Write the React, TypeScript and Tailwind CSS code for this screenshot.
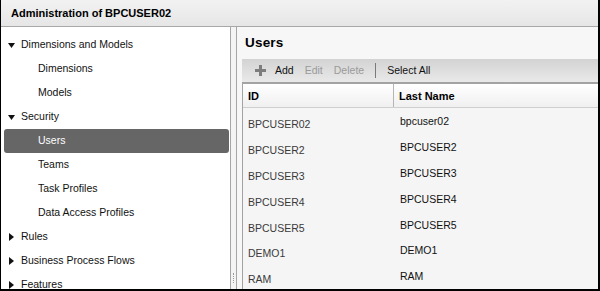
import React from 'react';

type TreeItem = { label: string; level: 0 | 1; open?: boolean; selected?: boolean };

const tree: TreeItem[] = [
  { label: 'Dimensions and Models', level: 0, open: true },
  { label: 'Dimensions', level: 1 },
  { label: 'Models', level: 1 },
  { label: 'Security', level: 0, open: true },
  { label: 'Users', level: 1, selected: true },
  { label: 'Teams', level: 1 },
  { label: 'Task Profiles', level: 1 },
  { label: 'Data Access Profiles', level: 1 },
  { label: 'Rules', level: 0, open: false },
  { label: 'Business Process Flows', level: 0, open: false },
  { label: 'Features', level: 0, open: false },
];

const users: [string, string][] = [
  ['BPCUSER02', 'bpcuser02'],
  ['BPCUSER2', 'BPCUSER2'],
  ['BPCUSER3', 'BPCUSER3'],
  ['BPCUSER4', 'BPCUSER4'],
  ['BPCUSER5', 'BPCUSER5'],
  ['DEMO1', 'DEMO1'],
  ['RAM', 'RAM'],
];

function Arrow({ open }: { open: boolean }) {
  if (open) {
    return (
      <svg width="7" height="5" viewBox="0 0 7 5" className="shrink-0">
        <path d="M0 0h7L3.5 5z" fill="#111" />
      </svg>
    );
  }
  return (
    <svg width="5" height="8" viewBox="0 0 5 8" className="shrink-0">
      <path d="M0 0l5 4-5 4z" fill="#111" />
    </svg>
  );
}

export default function App() {
  return (
    <div
      className="w-[600px] h-[291px] flex flex-col overflow-hidden bg-white border-l border-r-2 border-b-2 border-black text-[#1a1a1a]"
      style={{ fontFamily: '"Liberation Sans", Arial, sans-serif' }}
    >
      {/* title bar */}
      <div className="h-[27px] shrink-0 flex items-center pl-[10px] bg-gradient-to-b from-[#f2f2f2] to-[#e6e6e6] border-b border-[#a8a8a8]">
        <span className="text-[11px] font-bold text-black">Administration of BPCUSER02</span>
      </div>

      <div className="flex flex-1 min-h-0">
        {/* navigation tree */}
        <div className="w-[229px] shrink-0 bg-white pt-[6px]">
          {tree.map((t) =>
            t.selected ? (
              <div
                key={t.label}
                className="h-[24px] mx-[3px] mr-[1px] rounded-[3px] bg-[#666666] flex items-center pl-[34px] text-[10.5px] text-white"
              >
                {t.label}
              </div>
            ) : (
              <div
                key={t.label}
                className={
                  'h-[24px] flex items-center text-[10.5px] text-[#111] ' +
                  (t.level === 0 ? 'pl-[7px] gap-[6px]' : 'pl-[37px]')
                }
              >
                {t.level === 0 && (
                  <span className="w-[7px] flex justify-center">
                    <Arrow open={!!t.open} />
                  </span>
                )}
                {t.label}
              </div>
            )
          )}
        </div>

        {/* splitter */}
        <div className="w-[7px] shrink-0 border-l border-r border-[#a6a6a6] bg-[#f4f4f4] flex flex-col justify-end items-center pb-[6px]">
          <div className="w-px h-[10px] border-l border-dotted border-[#9a9a9a]" />
        </div>

        {/* content */}
        <div className="flex-1 min-w-0 bg-[#f7f7f7] pl-[5px] flex flex-col">
          <div className="h-[33px] flex items-center pl-[3px] pt-[1px]">
            <span className="text-[13.5px] font-bold text-black tracking-[0.2px]">Users</span>
          </div>

          {/* toolbar */}
          <div className="h-[25px] flex items-center bg-gradient-to-b from-[#d3d3d3] to-[#e9e9e9] text-[10.5px] pl-[13px]">
            <svg width="11" height="11" viewBox="0 0 11 11" className="mr-[9px]">
              <path d="M4 0h3v4h4v3H7v4H4V7H0V4h4z" fill="#7d7d7d" />
            </svg>
            <span className="text-[#111]">Add</span>
            <span className="ml-[11px] text-[#9a9a9a]">Edit</span>
            <span className="ml-[11px] text-[#9a9a9a]">Delete</span>
            <span className="ml-[11px] w-px h-[15px] bg-[#7a7a7a]" />
            <span className="ml-[11px] text-[#111]">Select All</span>
          </div>

          {/* table */}
          <div className="flex-1 border-l border-t-2 border-[#a3a3a3] bg-[#f5f5f5]">
            <div className="h-[24px] flex items-center bg-gradient-to-b from-white to-[#f0f0f0] border-b border-[#cfcfcf] text-[11px] font-bold text-black">
              <div className="w-[151px] pl-[5px] border-r border-[#b5b5b5] h-full flex items-center">ID</div>
              <div className="pl-[5px]">Last Name</div>
            </div>
            {users.map(([id, last]) => (
              <div key={id} className="h-[25.8px] flex text-[10.5px]">
                <div className="w-[151px] pl-[5px] pt-[9px] text-[#3a3a3a]">{id}</div>
                <div className="pl-[6px] pt-[6px] text-[#111]">{last}</div>
              </div>
            ))}
          </div>
        </div>
      </div>
    </div>
  );
}
